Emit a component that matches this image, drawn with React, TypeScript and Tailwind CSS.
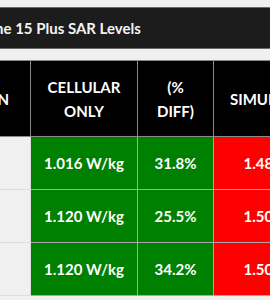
const rows = [
  { model: "A3094", cell: "1.016 W/kg", diff: "31.8%", sim: "1.489 W/kg", pad: "pr-[40px]" },
  { model: "A2848", cell: "1.120 W/kg", diff: "25.5%", sim: "1.503 W/kg", pad: "pr-[40px]" },
  { model: "A3093", cell: "1.120 W/kg", diff: "34.2%", sim: "1.502 W/kg", pad: "pr-[31px]" },
]

const App = () => {
  return (
    <div
      className="w-[270px] h-[300px] overflow-hidden bg-[#f0f0f0] pt-[7px]"
      style={{ fontFamily: "Lato, 'Open Sans', sans-serif" }}
    >
      {/* title bar */}
      <div className="h-[42px] bg-[#1c1c1c] border-y border-[#6a6a6a] flex items-center overflow-hidden">
        <p className="-ml-[35px] whitespace-nowrap text-[15px] font-bold text-[#f4f4f4]">
          iPhone 15 Plus SAR Levels
        </p>
      </div>

      {/* table */}
      <div className="mt-[11px] -ml-[110px]">
        <table className="table-fixed border-collapse w-[463px] text-[15px] font-bold text-white">
          <colgroup>
            <col className="w-[140px]" />
            <col className="w-[107px]" />
            <col className="w-[76px]" />
            <col className="w-[140px]" />
          </colgroup>
          <thead>
            <tr className="h-[76px] bg-black">
              <th className="border border-[#8a8a8a] pl-4 pr-[21px] text-right leading-6">VERSION</th>
              <th className="border border-[#8a8a8a] px-2 leading-6">CELLULAR<br />ONLY</th>
              <th className="border border-[#8a8a8a] px-2 leading-6">(%<br />DIFF)</th>
              <th className="border border-[#8a8a8a] px-4 leading-6">SIMULTANEOUS</th>
            </tr>
          </thead>
          <tbody>
            {rows.map((r) => (
              <tr key={r.model} className="h-[53px]">
                <td className={`border border-[#dcdcdc] bg-[#f0f0f0] text-right font-normal text-[#1fa3b5] ${r.pad}`}>
                  {r.model}
                </td>
                <td className="border border-[#a8a8a8] bg-[#008000] text-center">{r.cell}</td>
                <td className="border border-[#a8a8a8] bg-[#008000] text-center">{r.diff}</td>
                <td className="border border-[#a8a8a8] bg-[#ff0000] text-center">{r.sim}</td>
              </tr>
            ))}
          </tbody>
        </table>
      </div>
    </div>
  )
}

export default App
